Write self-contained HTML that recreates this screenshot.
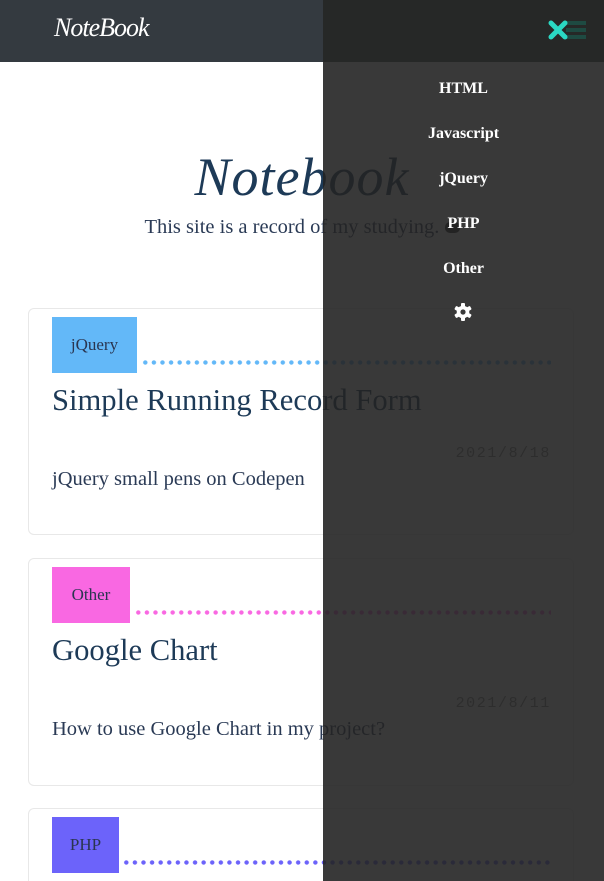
<!DOCTYPE html>
<html><head><meta charset="utf-8"><style>
*{margin:0;padding:0;box-sizing:border-box}
html,body{width:604px;height:881px;overflow:hidden}
body{position:relative;background:#fff;font-family:"Liberation Serif",serif;color:#1d3a57}
.hdr{position:absolute;left:0;top:0;width:604px;height:62px;background:#343a40}
.logo{position:absolute;left:54px;top:13px;font:italic 26px "Liberation Serif",serif;color:#fff;letter-spacing:-1px}
.hero{position:absolute;left:0;width:604px;text-align:center}
.card{position:absolute;left:28px;width:546px;border:1px solid #e8e8e8;border-radius:6px;background:#fff}
.tag{position:absolute;left:23px;top:8px;height:56px;line-height:56px;text-align:center;font-size:17px;color:#2a3550}
.dots{position:absolute;top:51px;height:5px;left:0;right:22px;background-image:radial-gradient(circle,var(--c) 2px,transparent 2.4px);background-size:8.6px 5px}
.title{position:absolute;left:23px;top:74px;font-size:30.6px;color:#1d3a57;white-space:nowrap}
.date{position:absolute;right:22px;top:136px;font:15px "Liberation Mono",monospace;color:#888;letter-spacing:1.6px}
.desc{position:absolute;left:23px;top:159px;font-size:20.5px;color:#2a3a55;white-space:nowrap}
.ov{position:absolute;left:323px;top:0;width:281px;height:881px;background:rgba(36,36,36,0.9)}
.ovh{position:absolute;left:323px;top:0;width:281px;height:62px;background:rgba(38,40,39,1)}
.menu{position:absolute;left:323px;width:281px;text-align:center;color:#fff;font-weight:bold;font-size:16px}
</style></head><body>
<div class="hdr"><div class="logo">NoteBook</div></div>
<div class="hero" style="top:146px;font:italic 54px 'Liberation Serif',serif;color:#1d3a57;letter-spacing:1px">Notebook</div>
<div class="hero" style="top:216px;font-size:20.5px;color:#2a3a55">This site is a record of my studying. <span style="display:inline-block;width:15px;height:11px;background:#222;border-radius:5px"></span></div>

<div class="card" style="top:308px;height:227px">
 <div class="tag" style="width:85px;background:#63b8f8">jQuery</div>
 <div class="dots" style="left:112px;--c:#63b8f8"></div>
 <div class="title">Simple Running Record Form</div>
 <div class="date">2021/8/18</div>
 <div class="desc">jQuery small pens on Codepen</div>
</div>
<div class="card" style="top:558px;height:228px">
 <div class="tag" style="width:78px;background:#f968e2">Other</div>
 <div class="dots" style="left:105px;--c:#f968e2"></div>
 <div class="title">Google Chart</div>
 <div class="date">2021/8/11</div>
 <div class="desc">How to use Google Chart in my project?</div>
</div>
<div class="card" style="top:808px;height:73px;border-bottom:none;border-radius:6px 6px 0 0">
 <div class="tag" style="width:67px;background:#6c63fa">PHP</div>
 <div class="dots" style="left:93px;--c:#6c63fa"></div>
</div>

<div class="ov"></div>
<div class="ovh"></div>
<svg style="position:absolute;left:546px;top:18px" width="42" height="26">
 <g stroke="#1e4a42" stroke-width="4"><line x1="20" y1="5" x2="40" y2="5"/><line x1="20" y1="12" x2="40" y2="12"/><line x1="20" y1="19" x2="40" y2="19"/></g>
 <g stroke="#2ad8c3" stroke-width="5" stroke-linecap="round"><line x1="5" y1="5" x2="19" y2="19"/><line x1="19" y1="5" x2="5" y2="19"/></g>
</svg>
<div class="menu" style="top:80px">HTML</div>
<div class="menu" style="top:125px">Javascript</div>
<div class="menu" style="top:170px">jQuery</div>
<div class="menu" style="top:215px">PHP</div>
<div class="menu" style="top:260px">Other</div>
<svg style="position:absolute;left:454px;top:303px" width="18" height="18" viewBox="0 0 18 18">
 <g fill="#fff" transform="translate(9 9)">
  <rect x="-2" y="-9" width="4" height="18" rx="1"/>
  <rect x="-2" y="-9" width="4" height="18" rx="1" transform="rotate(60)"/>
  <rect x="-2" y="-9" width="4" height="18" rx="1" transform="rotate(120)"/>
  <circle r="6.3"/>
 </g>
 <circle cx="9" cy="9" r="2.6" fill="#3a3a3a"/>
</svg>
</body></html>
